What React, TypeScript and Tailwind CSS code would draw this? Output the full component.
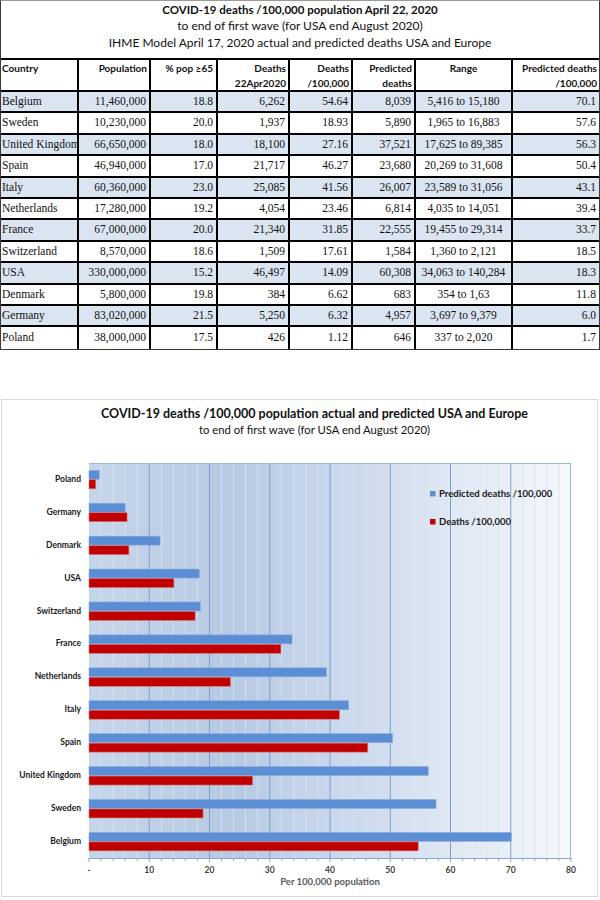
import React from 'react';

const rows: string[][] = [
  ['Belgium', '11,460,000', '18.8', '6,262', '54.64', '8,039', '5,416 to 15,180', '70.1'],
  ['Sweden', '10,230,000', '20.0', '1,937', '18.93', '5,890', '1,965 to 16,883', '57.6'],
  ['United Kingdom', '66,650,000', '18.0', '18,100', '27.16', '37,521', '17,625 to 89,385', '56.3'],
  ['Spain', '46,940,000', '17.0', '21,717', '46.27', '23,680', '20,269 to 31,608', '50.4'],
  ['Italy', '60,360,000', '23.0', '25,085', '41.56', '26,007', '23,589 to 31,056', '43.1'],
  ['Netherlands', '17,280,000', '19.2', '4,054', '23.46', '6,814', '4,035 to 14,051', '39.4'],
  ['France', '67,000,000', '20.0', '21,340', '31.85', '22,555', '19,455 to 29,314', '33.7'],
  ['Switzerland', '8,570,000', '18.6', '1,509', '17.61', '1,584', '1,360 to 2,121', '18.5'],
  ['USA', '330,000,000', '15.2', '46,497', '14.09', '60,308', '34,063 to 140,284', '18.3'],
  ['Denmark', '5,800,000', '19.8', '384', '6.62', '683', '354 to 1,63', '11.8'],
  ['Germany', '83,020,000', '21.5', '5,250', '6.32', '4,957', '3,697 to 9,379', '6.0'],
  ['Poland', '38,000,000', '17.5', '426', '1.12', '646', '337 to 2,020', '1.7'],
];

const chartData: { name: string; pred: number; deaths: number }[] = [
  { name: 'Poland', pred: 1.7, deaths: 1.12 },
  { name: 'Germany', pred: 6.0, deaths: 6.32 },
  { name: 'Denmark', pred: 11.8, deaths: 6.62 },
  { name: 'USA', pred: 18.3, deaths: 14.09 },
  { name: 'Switzerland', pred: 18.5, deaths: 17.61 },
  { name: 'France', pred: 33.7, deaths: 31.85 },
  { name: 'Netherlands', pred: 39.4, deaths: 23.46 },
  { name: 'Italy', pred: 43.1, deaths: 41.56 },
  { name: 'Spain', pred: 50.4, deaths: 46.27 },
  { name: 'United Kingdom', pred: 56.3, deaths: 27.16 },
  { name: 'Sweden', pred: 57.6, deaths: 18.93 },
  { name: 'Belgium', pred: 70.1, deaths: 54.64 },
];

const CAL = "font-['Lato','Liberation_Sans',sans-serif]";
const SERIF = "font-['Liberation_Serif','Times_New_Roman',serif]";
const GRID = 'grid grid-cols-[78px_72px_67px_72px_63px_63px_97px_86px]';

function Table() {
  const headers: { t: React.ReactNode; align: string }[] = [
    { t: 'Country', align: 'text-left pl-[1px]' },
    { t: 'Population', align: 'text-right pr-[2px]' },
    { t: '% pop ≥65', align: 'text-right pr-[3px]' },
    { t: (<>Deaths<br />22Apr2020</>), align: 'text-right pr-[2px]' },
    { t: (<>Deaths<br />/100,000</>), align: 'text-right pr-[2px]' },
    { t: (<>Predicted<br />deaths</>), align: 'text-right pr-[2px]' },
    { t: 'Range', align: 'text-center' },
    { t: (<>Predicted deaths<br />/100,000</>), align: 'text-right pr-[2px]' },
  ];
  return (
    <div className="w-[600px] border border-[#3a3a3a] border-t-[#9a9a9a]">
      <div className={`h-[57px] flex flex-col items-center pt-[1px] text-[#111] ${CAL}`}>
        <div className="text-[11.5px] font-bold leading-[16px]">COVID-19 deaths /100,000 population April 22, 2020</div>
        <div className="text-[12px] leading-[16px]">to end of first wave (for USA end August 2020)</div>
        <div className="text-[12px] leading-[16px] mt-[1px]">IHME Model April 17, 2020 actual and predicted deaths USA and Europe</div>
      </div>
      <div className={`${GRID} h-[34px] border-t-2 border-b-2 border-black ${CAL}`}>
        {headers.map((h, i) => (
          <div
            key={i}
            className={`${h.align} text-[10px] font-bold leading-[15px] pt-[1px] text-[#111] ${i < 7 ? 'border-r-2 border-black' : ''}`}
          >
            {h.t}
          </div>
        ))}
      </div>
      {rows.map((r, ri) => (
        <div
          key={ri}
          className={`${GRID} h-[21.4px] ${ri < rows.length - 1 ? 'border-b-2 border-black' : ''} ${ri % 2 === 0 ? 'bg-[#dbe5f1]' : 'bg-white'} ${SERIF}`}
        >
          {r.map((c, ci) => (
            <div
              key={ci}
              className={`flex items-center overflow-hidden whitespace-nowrap text-[11.5px] text-[#111] ${ci === 0 ? 'justify-start pl-[1px]' : ci === 6 ? 'justify-center' : 'justify-end pr-[3px]'} ${ci < 7 ? 'border-r-2 border-black' : ''}`}
            >
              {c}
            </div>
          ))}
        </div>
      ))}
    </div>
  );
}

const PW = 482;
const PH = 395;
const U = PW / 80;
const BAND = PH / 12;

function Plot() {
  const minor: number[] = [];
  for (let v = 2; v < 80; v += 2) if (v % 10 !== 0) minor.push(v);
  const major = [10, 20, 30, 40, 50, 60, 70];
  const ticks = [0, 10, 20, 30, 40, 50, 60, 70, 80];
  const smallTicks: number[] = [];
  for (let v = 0; v <= 80; v += 2) smallTicks.push(v);
  return (
    <svg width={PW + 12} height={PH + 20} className="block overflow-visible">
      <defs>
        <linearGradient id="bg" x1="0" y1="0" x2="1" y2="0">
          <stop offset="0" stopColor="#c6d6ea" />
          <stop offset="0.3" stopColor="#b7cae3" />
          <stop offset="0.55" stopColor="#ccdaed" />
          <stop offset="0.8" stopColor="#e4ebf5" />
          <stop offset="1" stopColor="#f5f8fc" />
        </linearGradient>
      </defs>
      <rect x={0} y={0} width={PW} height={PH} fill="url(#bg)" />
      {minor.map((v) => (
        <line key={'m' + v} x1={v * U} x2={v * U} y1={0} y2={PH} stroke="#dbe4f1" strokeWidth={1} opacity={0.85} />
      ))}
      {major.map((v) => (
        <line key={'M' + v} x1={v * U} x2={v * U} y1={0} y2={PH} stroke="#7d9dcd" strokeWidth={1} />
      ))}
      <line x1={0} x2={PW} y1={0.5} y2={0.5} stroke="#9db6dc" strokeWidth={1} />
      <line x1={PW - 0.5} x2={PW - 0.5} y1={0} y2={PH} stroke="#9db6dc" strokeWidth={1} />
      {chartData.map((d, i) => {
        const y = i * BAND + 7.3;
        return (
          <g key={d.name}>
            <rect x={0} y={y} width={d.pred * U} height={9} fill="#5b8ed4" stroke="#8cafe0" strokeWidth={0.6} />
            <rect x={0} y={y + 9.5} width={d.deaths * U} height={9} fill="#c00000" stroke="#d77a7a" strokeWidth={0.6} />
          </g>
        );
      })}
      <line x1={0} x2={PW} y1={PH + 0.5} y2={PH + 0.5} stroke="#8aa6cf" strokeWidth={1} />
      {smallTicks.map((v) => (
        <line key={'t' + v} x1={v * U} x2={v * U} y1={PH} y2={PH + (v % 10 === 0 ? 4 : 3)} stroke="#8aa6cf" strokeWidth={1} />
      ))}
      {ticks.map((v) => (
        <text
          key={'l' + v}
          x={v * U}
          y={PH + 14.5}
          textAnchor="middle"
          fontFamily="Lato, 'Liberation Sans', sans-serif"
          fontWeight={700}
          fontSize={8.5}
          fill="#404040"
        >
          {v === 0 ? '-' : String(v)}
        </text>
      ))}
      <rect x={341} y={28} width={5.5} height={5.5} fill="#5b8ed4" />
      <text x={350} y={34} fontFamily="Lato, 'Liberation Sans', sans-serif" fontWeight={700} fontSize={9.5} fill="#1a1a1a">
        Predicted deaths /100,000
      </text>
      <rect x={341} y={56} width={5.5} height={5.5} fill="#c00000" />
      <text x={350} y={62} fontFamily="Lato, 'Liberation Sans', sans-serif" fontWeight={700} fontSize={9.5} fill="#1a1a1a">
        Deaths /100,000
      </text>
    </svg>
  );
}

function Chart() {
  return (
    <div className={`w-[597px] h-[498px] ml-[1px] border border-[#d9d9d9] bg-white ${CAL}`}>
      <div className="flex flex-col items-center pt-[6px] pl-[30px]">
        <div className="text-[12.5px] font-bold leading-[16px] text-[#111]">
          COVID-19 deaths /100,000 population actual and predicted USA and Europe
        </div>
        <div className="text-[11.3px] leading-[16px] text-[#111]">to end of first wave (for USA end August 2020)</div>
      </div>
      <div className="flex mt-[25px]">
        <div className="w-[79px] flex flex-col">
          {chartData.map((d) => (
            <div key={d.name} className="h-[32.917px] flex items-center justify-end">
              <span className="text-[8.5px] font-bold text-[#1a1a1a] leading-none">{d.name}</span>
            </div>
          ))}
        </div>
        <div className="ml-[8px]">
          <Plot />
          <div className="w-[482px] text-center text-[9.5px] font-bold text-[#595959] leading-none mt-[-1px]">
            Per 100,000 population
          </div>
        </div>
      </div>
    </div>
  );
}

export default function App() {
  return (
    <div className="w-[600px] h-[900px] bg-white">
      <Table />
      <div className="h-[49px]" />
      <Chart />
    </div>
  );
}
